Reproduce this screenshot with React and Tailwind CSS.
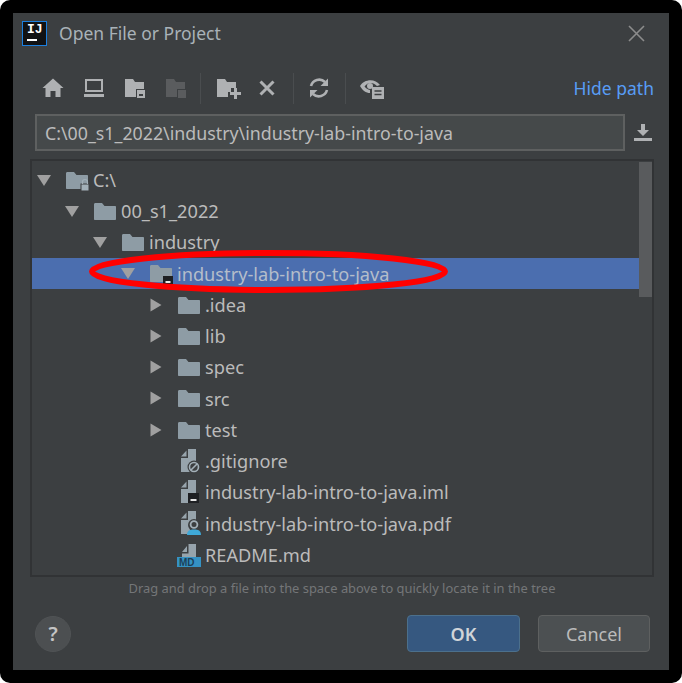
import React from "react";

const folderPath = "M0 2.5 C0 1.5 .6 1 1.5 1 H8 L10.5 4 H21 C21.6 4 22 4.4 22 5 V17 C22 17.6 21.6 18 21 18 H1 C.4 18 0 17.6 0 17 Z";

const Tri = ({ open }) => (
  <svg width="14" height="14" viewBox="0 0 14 14" className="shrink-0">
    {open ? <path d="M0 2 H14 L7 13 Z" fill="#a0a0a0" /> : <path d="M1.5 0.5 L12.5 7 L1.5 13.5 Z" fill="#a0a0a0" />}
  </svg>
);

const Folder = ({ badge, lock }) => (
  <svg width="24" height="24" viewBox="0 0 24 24" className="shrink-0">
    <path d={folderPath} transform="translate(1 3)" fill="#8e9ca5" />
    {lock && (
      <g>
        <rect x="16" y="16" width="8" height="7" fill="#a3b0b8" stroke="#3c3f41" strokeWidth="1" />
        <path d="M17.5 16 V14 a2.5 2.5 0 0 1 5 0 V16" fill="none" stroke="#a3b0b8" strokeWidth="1.2" />
      </g>
    )}
    {badge && (
      <g>
        <rect x="14" y="15" width="10" height="9" fill="#1e2023" />
        <rect x="16.5" y="20" width="5" height="2" fill="#e8e8e8" />
      </g>
    )}
  </svg>
);

const FileIcon = ({ kind }) => (
  <svg width="24" height="28" viewBox="0 0 24 28" className="shrink-0">
    {kind === "md" ? (
      <g>
        <path d="M5 11 L10 5 V11 Z M11.5 3 H19 V16 H5 V12.5 H11.5 Z" fill="#97a4ac" />
        <rect x="0" y="16" width="24" height="10" fill="#3592c4" />
        <text x="2" y="24.5" fontSize="10" fontWeight="700" fill="#1c3f58" fontFamily="'Liberation Sans', sans-serif">MD</text>
      </g>
    ) : (
      <g>
        <path d="M4 9.5 L9.5 3.5 V9.5 Z M11 2 H19 V16 H13 V25 H4 V11 H11 Z" fill="#97a4ac" />
        {kind === "ignore" && (
          <g>
            <circle cx="17" cy="20" r="6.5" fill="#3c3f41" />
            <circle cx="17" cy="20" r="4.5" fill="none" stroke="#a3b0b8" strokeWidth="1.6" />
            <path d="M14 23 L20 17" stroke="#a3b0b8" strokeWidth="1.6" />
          </g>
        )}
        {kind === "iml" && (
          <g>
            <rect x="11" y="15" width="11" height="10" fill="#1e2023" />
            <rect x="13.5" y="21" width="6" height="2" fill="#e8e8e8" />
          </g>
        )}
        {kind === "pdf" && (
          <g>
            <circle cx="17" cy="16" r="6" fill="#3c3f41" />
            <circle cx="17" cy="15.5" r="3.4" fill="#3c3f41" stroke="#a3b0b8" strokeWidth="1.8" />
            <path d="M10 26 C10 21.5 13 20.5 17 20.5 C21 20.5 24 21.5 24 26 Z" fill="#3fa9d8" />
          </g>
        )}
      </g>
    )}
  </svg>
);

const rows = [
  { depth: 0, open: true, text: "C:\\", lock: true },
  { depth: 1, open: true, text: "00_s1_2022" },
  { depth: 2, open: true, text: "industry" },
  { depth: 3, open: true, text: "industry-lab-intro-to-java", badge: true, selected: true },
  { depth: 4, open: false, text: ".idea" },
  { depth: 4, open: false, text: "lib" },
  { depth: 4, open: false, text: "spec" },
  { depth: 4, open: false, text: "src" },
  { depth: 4, open: false, text: "test" },
  { depth: 4, file: "ignore", text: ".gitignore" },
  { depth: 4, file: "iml", text: "industry-lab-intro-to-java.iml" },
  { depth: 4, file: "pdf", text: "industry-lab-intro-to-java.pdf" },
  { depth: 4, file: "md", text: "README.md" },
];

const TreeRow = ({ row }) => (
  <div
    className={`flex h-[31.25px] items-center ${row.selected ? "relative bg-[#4b6eaf] text-[#b4bdca]" : ""}`}
    style={{ paddingLeft: 5 + row.depth * 28 }}
  >
    {row.file ? <div className="w-[14px] shrink-0" /> : <Tri open={row.open} />}
    <div className="ml-[14px] flex w-[24px] shrink-0 justify-center">
      {row.file ? <FileIcon kind={row.file} /> : <Folder badge={row.badge} lock={row.lock} />}
    </div>
    <span className="ml-[4px] whitespace-nowrap pt-[2px]">{row.text}</span>
  </div>
);

const Sep = () => <div className="h-[31px] w-px bg-[#4a4d4f]" />;

const Toolbar = () => (
  <div className="flex h-[32px] items-center">
    <svg width="22" height="22" viewBox="0 0 22 22" className="ml-[12px]">
      <path d="M11 1.5 L21.5 11 H18.5 V20 H13.5 V14 H8.5 V20 H3.5 V11 H.5 Z" fill="#afb1b3" />
    </svg>
    <svg width="22" height="22" viewBox="0 0 22 22" className="ml-[19px]">
      <path d="M2 2 H20 V15 H2 Z M4 4 V13 H18 V4 Z" fill="#afb1b3" fillRule="evenodd" />
      <rect x="1" y="17" width="20" height="3" fill="#afb1b3" />
    </svg>
    <svg width="22" height="22" viewBox="0 0 22 22" className="ml-[19px]">
      <path d="M1 2 H9 L11 5 H20 V12 H12 V20 H1 Z" fill="#afb1b3" />
      <rect x="13" y="13" width="8" height="8" fill="#afb1b3" />
      <rect x="15" y="17" width="4" height="2" fill="#3c3f41" />
    </svg>
    <svg width="22" height="22" viewBox="0 0 22 22" className="ml-[19px]">
      <path d="M1 2 H9 L11 5 H20 V12 H12 V20 H1 Z" fill="#5a5c5e" />
      <rect x="13" y="13" width="8" height="8" fill="#5a5c5e" />
    </svg>
    <div className="ml-[13px]"><Sep /></div>
    <svg width="26" height="22" viewBox="0 0 26 22" className="ml-[15px]">
      <path d="M1 2 H9 L11 5 H20 V11 H15 V15 H12 V20 H1 Z" fill="#afb1b3" />
      <path d="M18 11 H21 V15 H25 V18 H21 V22 H18 V18 H14 V15 H18 Z" fill="#afb1b3" />
    </svg>
    <svg width="18" height="18" viewBox="0 0 18 18" className="ml-[16px]">
      <path d="M2.5 2.5 L15.5 15.5 M15.5 2.5 L2.5 15.5" stroke="#afb1b3" strokeWidth="3" />
    </svg>
    <div className="ml-[17px]"><Sep /></div>
    <svg width="22" height="22" viewBox="0 0 22 22" className="ml-[14px]">
      <path d="M3 9 A8.5 8.5 0 0 1 17 5" fill="none" stroke="#afb1b3" strokeWidth="2.6" />
      <path d="M20 1.5 V9 H12.5 Z" fill="#afb1b3" />
      <path d="M19 13 A8.5 8.5 0 0 1 5 17" fill="none" stroke="#afb1b3" strokeWidth="2.6" />
      <path d="M2 20.5 V13 H9.5 Z" fill="#afb1b3" />
    </svg>
    <div className="ml-[15px]"><Sep /></div>
    <svg width="26" height="24" viewBox="0 0 26 24" className="ml-[13px]">
      <path d="M1 10 C5 3 16 2 21 9 L18 10 C14 6 9 6 5.5 10.5 C7 12.5 8.5 13.5 11 14 V17 C7 17 3.5 14.5 1 10 Z" fill="#afb1b3" />
      <circle cx="11" cy="10" r="3" fill="#afb1b3" />
      <path d="M13 11 H25 V23 H13 Z" fill="#afb1b3" />
      <path d="M15.5 15 H22.5 M15.5 18.5 H22.5" stroke="#3c3f41" strokeWidth="1.5" />
    </svg>
    <span className="ml-auto text-[17.5px] text-[#589df6]">Hide path</span>
  </div>
);

export default function App() {
  return (
    <div className="min-h-[683px] w-[682px] bg-white font-['Noto_Sans','Open_Sans',sans-serif]">
      <div className="relative h-[683px] rounded-[10px] bg-black p-[13px]">
        <div className="flex h-[657px] w-[656px] flex-col bg-[#3c3f41] pl-[17px] pr-[15px] text-[#bbbbbb]">
          {/* title bar */}
          <div className="-ml-[8px] mr-[9px] flex h-[40px] items-center">
            <div className="flex h-[25px] w-[25px] flex-col border border-[#1b7fe0] bg-[#111214] px-[4px] pt-[2px] font-['Liberation_Mono',monospace] text-[13px] font-bold leading-[12px] text-white">
              IJ
              <div className="mt-[3px] h-[2px] w-[10px] bg-white" />
            </div>
            <span className="ml-[12px] text-[17.5px] text-[#a9b2b8]">Open File or Project</span>
            <svg width="17" height="17" viewBox="0 0 17 17" className="ml-auto">
              <path d="M1 1 L16 16 M16 1 L1 16" stroke="#8c8c8c" strokeWidth="1.6" />
            </svg>
          </div>

          <div className="mt-[19px]"><Toolbar /></div>

          {/* path field */}
          <div className="ml-[5px] mt-[10px] flex items-center">
            <div className="flex h-[37px] w-[590px] items-center border-2 border-[#5e6060] bg-[#45494a] pl-[8px] pt-[1px] text-[17.8px]">
              C:\00_s1_2022\industry\industry-lab-intro-to-java
            </div>
            <svg width="20" height="20" viewBox="0 0 20 20" className="ml-[8px]">
              <path d="M8 1 H12 V7 H16 L10 13 L4 7 H8 Z M1 15 H19 V18 H1 Z" fill="#afb1b3" />
            </svg>
          </div>

          {/* tree */}
          <div className="relative mt-[8px] h-[418px] border-2 border-[#313335] text-[18.2px]">
            <div className="pt-[3px]">
              {rows.map((row) => (
                <TreeRow key={row.text} row={row} />
              ))}
            </div>
            <div className="absolute right-0 top-[1px] h-[135px] w-[13px] bg-[#595b5d]" />
          </div>

          <div className="mt-[2px] text-center text-[12.9px] text-[#747678]">
            Drag and drop a file into the space above to quickly locate it in the tree
          </div>

          {/* footer */}
          <div className="ml-[5px] mr-[4px] mt-[17px] flex items-center">
            <div className="flex h-[36px] w-[36px] items-center justify-center rounded-full border border-[#505355] bg-[#4c4f51] text-[20px] font-semibold text-[#c4c4c4]">
              ?
            </div>
            <button className="ml-auto h-[37px] w-[113px] rounded-[4px] border border-[#4c708c] bg-[#365880] pt-[2px] text-[18px] font-semibold text-[#d0d4d8]">
              OK
            </button>
            <button className="ml-[18px] h-[37px] w-[112px] rounded-[4px] border border-[#5e6060] bg-[#4c5052] pt-[2px] text-[18px] text-[#bbbbbb]">
              Cancel
            </button>
          </div>
        </div>

        {/* red annotation drawn over the screenshot */}
        <svg width="682" height="683" viewBox="0 0 682 683" className="absolute left-0 top-0">
          <ellipse cx="268.5" cy="271.5" rx="176.5" ry="18.5" fill="none" stroke="#ff0000" strokeWidth="6" />
        </svg>
      </div>
    </div>
  );
}
